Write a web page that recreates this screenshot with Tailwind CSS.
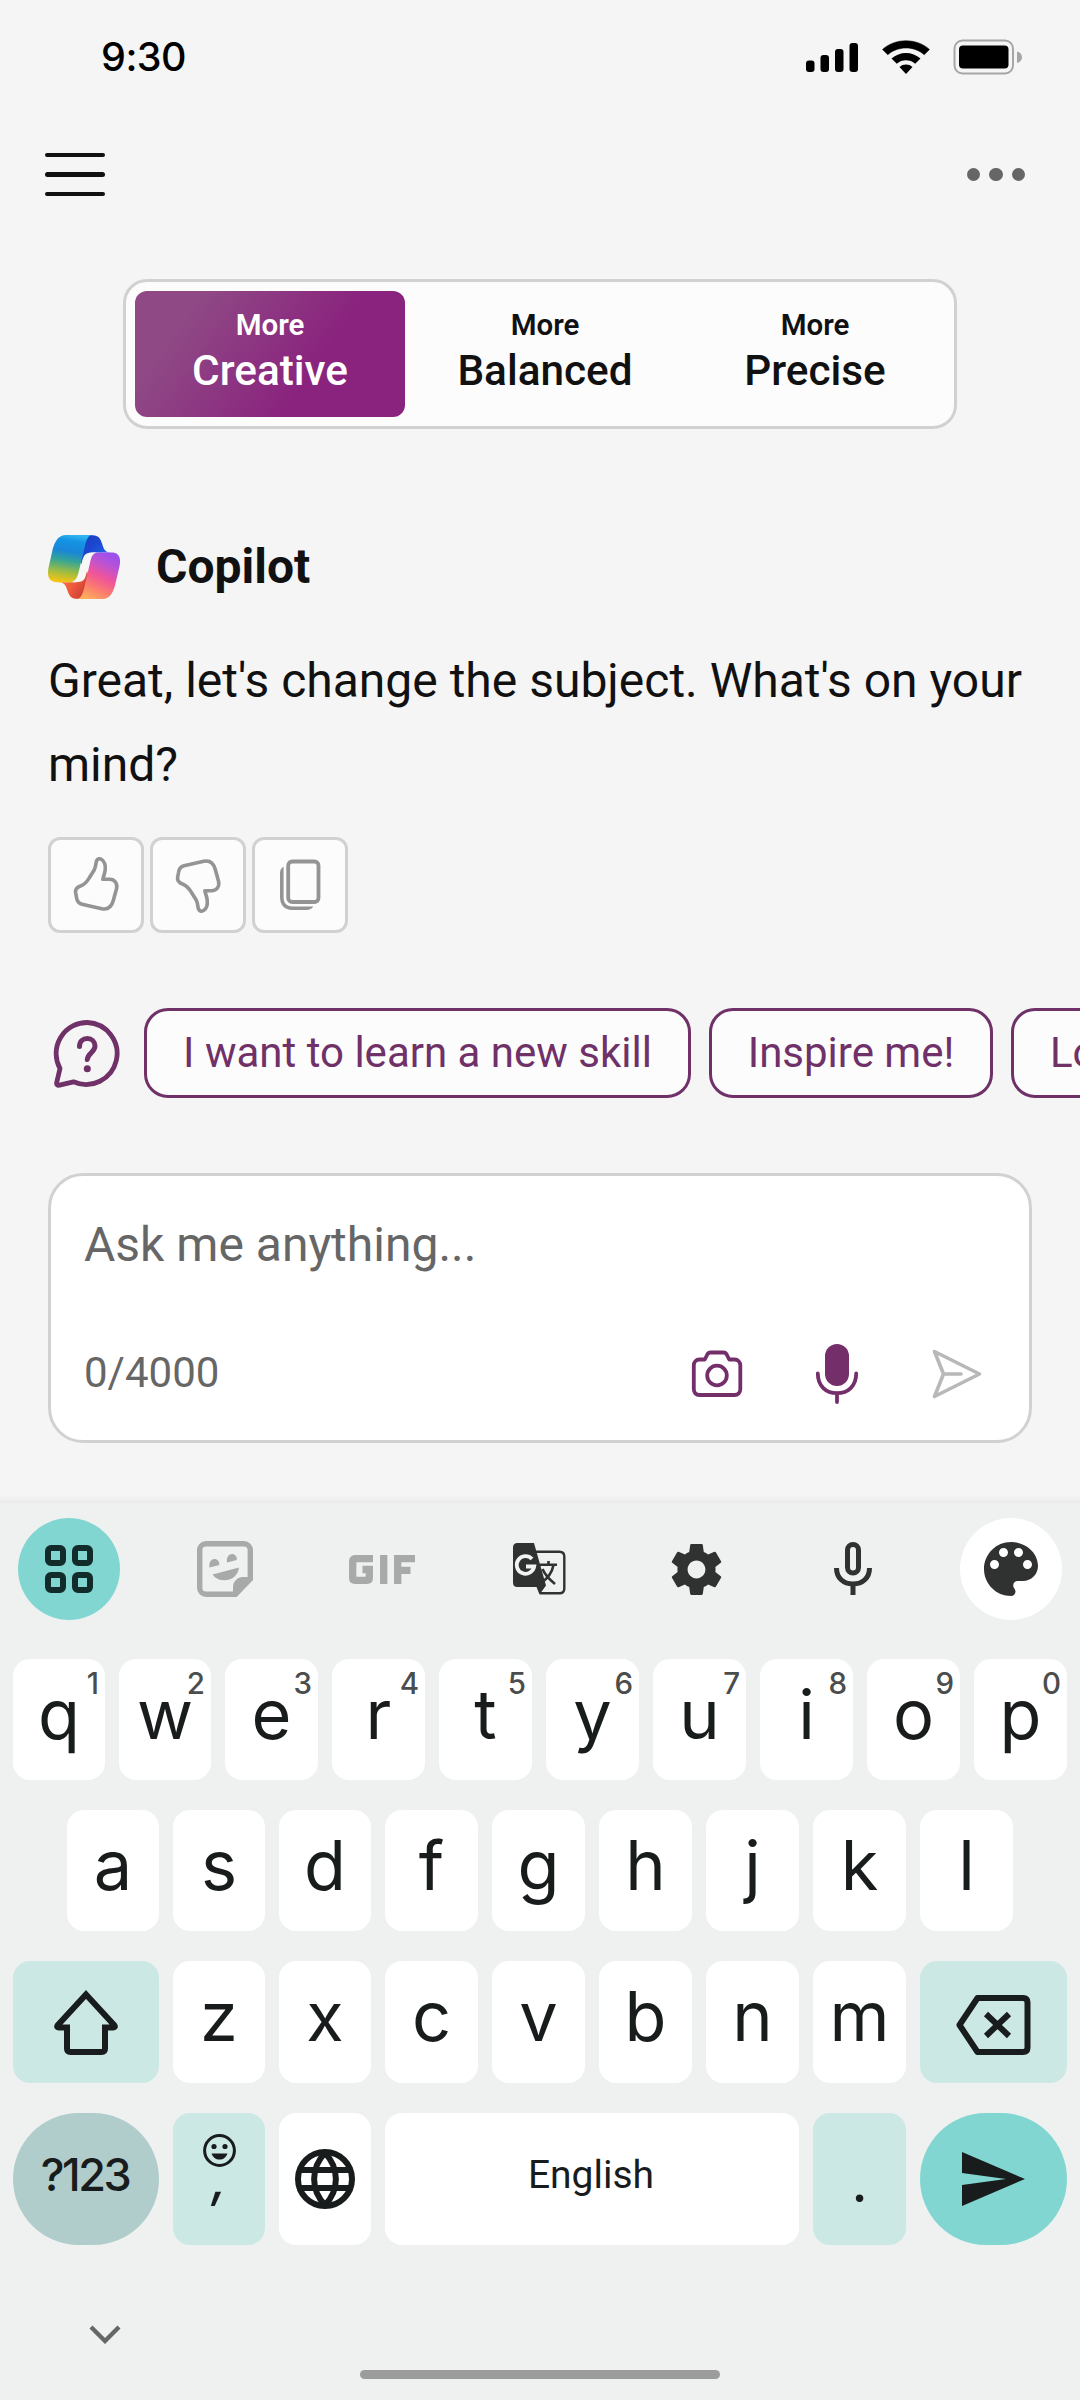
<!DOCTYPE html>
<html lang="en">
<head>
<meta charset="utf-8">
<title>Copilot</title>
<script src="https://cdn.jsdelivr.net/npm/@tailwindcss/browser@4"></script>
</head>
<body class="w-[1080px] h-[2400px] overflow-hidden bg-[#f5f5f5] font-['Roboto',sans-serif] text-[#111111] flex flex-col">

  <!-- Status bar -->
  <header class="h-[112px] flex items-center justify-between pl-[101px] pr-[57px] pt-px shrink-0">
    <span class="font-['Inter',sans-serif] font-medium text-[39.5px] leading-[56px] tracking-[-0.5px] text-black pt-px">9:30</span>
    <svg class="w-[217px] h-9" viewBox="0 0 217 36">
      <g fill="#000">
        <rect x="0" y="21.500" width="8.500" height="11.500" rx="3"/>
        <rect x="14.500" y="16" width="8.500" height="17" rx="3"/>
        <rect x="29" y="10" width="8.500" height="23" rx="3"/>
        <rect x="43.500" y="4" width="8.500" height="29" rx="3"/>
        <path d="M76.500 10.500C89 -1.200 111 -1.200 123.500 10.500L118.200 15.800C108.500 6.800 91.500 6.800 81.800 15.800Z" stroke="#000" stroke-width="0.500" stroke-linejoin="round"/>
        <path d="M85.500 19.500C93.500 12 106.500 12 114.500 19.500L109.200 24.800C104 20.200 96 20.200 90.800 24.800Z"/>
        <path d="M93.500 28C97 24.700 103 24.700 106.500 28L100 35Z"/>
        <rect x="153" y="6.500" width="49.500" height="23" rx="4"/>
      </g>
      <rect x="148.500" y="1.500" width="58.500" height="33" rx="8" fill="none" stroke="#a6a6a6" stroke-width="2"/>
      <path d="M211 12.500C214 13 216 15.500 216 18.200C216 21 214 23.500 211 24Z" fill="#a6a6a6"/>
    </svg>
  </header>

  <!-- App bar -->
  <nav class="h-[125px] flex items-center justify-between pl-[45px] pr-[55px] shrink-0">
    <div class="w-[60px] flex flex-col gap-[15px]">
      <span class="h-[4.500px] rounded-full bg-[#111111]"></span>
      <span class="h-[4.500px] rounded-full bg-[#111111]"></span>
      <span class="h-[4.500px] rounded-full bg-[#111111]"></span>
    </div>
    <div class="flex gap-[9px]">
      <span class="size-[13.500px] rounded-full bg-[#666666]"></span>
      <span class="size-[13.500px] rounded-full bg-[#666666]"></span>
      <span class="size-[13.500px] rounded-full bg-[#666666]"></span>
    </div>
  </nav>

  <!-- Conversation style -->
  <section class="mt-[42px] mx-auto w-[834px] h-[150px] shrink-0 rounded-[24px] border-[3px] border-[#d1d1d1] bg-[#fcfcfc] pl-[9px] py-[9px] flex font-medium">
    <button class="w-[270px] h-[126px] mr-[5px] shrink-0 rounded-[12px] bg-[linear-gradient(125deg,#8f4a85_0%,#8f4a85_18%,#8a237e_65%,#8a237e_100%)] text-white flex flex-col items-center pt-[19px]">
      <span class="text-[29.500px] leading-[30px] font-semibold">More</span>
      <span class="text-[42.300px] leading-[48px] mt-[7px]">Creative</span>
    </button>
    <button class="w-[270px] h-[126px] shrink-0 flex flex-col items-center pt-[19px]">
      <span class="text-[29.500px] leading-[30px] font-semibold">More</span>
      <span class="text-[42.300px] leading-[48px] mt-[7px]">Balanced</span>
    </button>
    <button class="w-[270px] h-[126px] shrink-0 flex flex-col items-center pt-[19px]">
      <span class="text-[29.500px] leading-[30px] font-semibold">More</span>
      <span class="text-[42.300px] leading-[48px] mt-[7px]">Precise</span>
    </button>
  </section>

  <!-- Answer -->
  <section class="mt-[106px] px-12 shrink-0">
    <div class="flex items-center gap-9 h-16">
      <svg class="w-[72px] h-16" viewBox="24 30 216 190" preserveAspectRatio="none">
        <defs>
          <linearGradient id="left" x1="0.550" y1="0" x2="0.400" y2="1">
            <stop offset="0" stop-color="#2fb3f0"/><stop offset="0.120" stop-color="#1494e4"/><stop offset="0.350" stop-color="#1a86d8"/><stop offset="0.550" stop-color="#36a595"/><stop offset="0.780" stop-color="#9abc44"/><stop offset="1" stop-color="#f4c414"/>
          </linearGradient>
          <linearGradient id="blue" x1="0" y1="0" x2="1" y2="1">
            <stop offset="0" stop-color="#1a3bb5"/><stop offset="0.450" stop-color="#1b48d2"/><stop offset="1" stop-color="#2c7cf0"/>
          </linearGradient>
          <linearGradient id="right" x1="0.750" y1="0" x2="0.300" y2="1">
            <stop offset="0" stop-color="#9a4ff0"/><stop offset="0.220" stop-color="#b853d6"/><stop offset="0.500" stop-color="#f0549a"/><stop offset="0.750" stop-color="#fb7a70"/><stop offset="1" stop-color="#ffab5c"/>
          </linearGradient>
          <linearGradient id="orange" x1="0" y1="0.200" x2="0.900" y2="0.700">
            <stop offset="0" stop-color="#f9793c"/><stop offset="0.550" stop-color="#ee5a3c"/><stop offset="1" stop-color="#c83c34"/>
          </linearGradient>
        </defs>
        <path d="M148 30C176 30 180 38 186 55C191 70 194 81 212 82H160C140 82 132 92 124 118L110 60Z" fill="url(#blue)"/>
        <path d="M116 220C92 220 88 211 82 194C77 178 73 170 54 170H102C122 170 130 160 140 132L155 190Z" fill="url(#orange)"/>
        <path d="M155 30H78C54 30 45 50 38 72L26 125C20 155 28 170 52 170H90C106 170 112 155 116 140L134 66C140 40 146 32 155 30Z" fill="url(#left)"/>
        <path d="M110 220H188C210 220 219 200 225 180L238 125C244 98 238 82 214 82H176C160 82 155 92 151 108L134 182C128 208 122 218 110 220Z" fill="url(#right)"/>
        <path d="M158 82C138 82 132 88 127 106L118 142C112 162 107 170 98 170H106C126 170 134 166 138 148L149 110C154 88 160 82 176 82Z" fill="#f7f7f8"/>
      </svg>
      <h1 class="font-bold text-[48px] leading-[64px]">Copilot</h1>
    </div>
    <p class="mt-[40px] w-[984px] text-[48px] leading-[84px] whitespace-nowrap">Great, let's change the subject. What's on your<br>mind?</p>
    <div class="mt-[30px] flex gap-1.5">
      <button class="size-24 rounded-[12px] border-[3px] border-[#d1d1d1] bg-[#fcfcfc]">
        <svg class="-m-[3px] size-24" viewBox="0 0 96 96" fill="none" stroke="#949494" stroke-width="3.600" stroke-linejoin="round" stroke-linecap="round">
          <path d="M48.500 24C49.500 21.500 52 21.300 53.800 22.600C56.500 24.600 57.800 28 57.200 33C56.700 37 55.300 39.500 54.800 42.300H61.500C66.700 42.300 69.700 46.500 68.600 51.500L65.300 63.500C63.700 69.500 60 73 53.800 71.800L34 67.200C30.500 66.400 29 64 28.500 60.500L27.600 55.500C27 51.500 29.500 50 33 48.800C37.500 47.200 39 44.500 41.500 40.500L46.200 33C47.800 30 47.500 27 48.500 24Z"/>
        </svg>
      </button>
      <button class="size-24 rounded-[12px] border-[3px] border-[#d1d1d1] bg-[#fcfcfc]">
        <svg class="-m-[3px] size-24 -scale-y-100" viewBox="0 0 96 96" fill="none" stroke="#949494" stroke-width="3.600" stroke-linejoin="round" stroke-linecap="round">
          <path d="M48.500 24C49.500 21.500 52 21.300 53.800 22.600C56.500 24.600 57.800 28 57.200 33C56.700 37 55.300 39.500 54.800 42.300H61.500C66.700 42.300 69.700 46.500 68.600 51.500L65.300 63.500C63.700 69.500 60 73 53.800 71.800L34 67.200C30.500 66.400 29 64 28.500 60.500L27.600 55.500C27 51.500 29.500 50 33 48.800C37.500 47.200 39 44.500 41.500 40.500L46.200 33C47.800 30 47.500 27 48.500 24Z"/>
        </svg>
      </button>
      <button class="size-24 rounded-[12px] border-[3px] border-[#d1d1d1] bg-[#fcfcfc]">
        <svg class="-m-[3px] size-24" viewBox="0 0 96 96">
          <rect x="36.200" y="24.500" width="30.300" height="40.500" rx="4" fill="none" stroke="#949494" stroke-width="3.800"/>
          <path d="M31.600 29.700V60C31.600 66 34.500 69.500 40.500 69.500H61.300C60 71.800 57.500 73 54.500 73H40C32.500 73 28 68 28 60V36C28 33 29.300 31 31.600 29.700Z" fill="#949494"/>
        </svg>
      </button>
    </div>
  </section>

  <!-- Suggestions -->
  <section class="mt-[75px] h-[90px] shrink-0 pl-[53px] flex items-center overflow-hidden text-[#6f3168]">
    <svg class="w-[68px] h-[68px] mr-[23px] mt-[1px] shrink-0" viewBox="0 0 68 68" fill="none" stroke="#6f3168">
      <path d="M34.300 2.500A31 31 0 1 1 20.500 61.800L6.500 65.200C4.500 65.600 3.200 64.500 3.700 62.500L7 48.500A31 31 0 0 1 34.300 2.500Z" stroke-width="4.800" stroke-linejoin="round"/>
      <path d="M26.500 26.500C26.500 21.500 30 18.500 34.300 18.500C38.800 18.500 42 21.800 42 26C42 32.500 34.500 33 34.300 39.500" stroke-width="5" stroke-linecap="round"/>
      <circle cx="34.300" cy="48.800" r="3.500" fill="#6f3168" stroke="none"/>
    </svg>
    <div class="flex gap-[18px] text-[42px] leading-[84px] whitespace-nowrap">
      <button class="w-[547px] h-[90px] rounded-[24px] border-[3px] border-[#6f3168] bg-[#fcfcfc] shrink-0 pb-[3px]">I want to learn a new skill</button>
      <button class="w-[284px] h-[90px] rounded-[24px] border-[3px] border-[#6f3168] bg-[#fcfcfc] shrink-0 pb-[3px]">Inspire me!</button>
      <button class="w-[300px] h-[90px] rounded-[24px] border-[3px] border-[#6f3168] bg-[#fcfcfc] shrink-0 pb-[3px] pl-9 text-left">Lo</button>
    </div>
  </section>

  <!-- Composer -->
  <section class="mt-[75px] mx-12 h-[270px] shrink-0 rounded-[35px] border-[3px] border-[#d1d1d1] bg-white pl-[33px] pr-[41px] pt-[41px] text-[#666666]">
    <p class="text-[48px] leading-[56px]">Ask me anything...</p>
    <div class="mt-[66px] h-[70px] flex items-center justify-between">
      <span class="text-[42px] leading-[50px] pb-[3px]">0/4000</span>
      <svg class="w-[300px] h-[70px]" viewBox="688 1339 300 70" fill="none" stroke-linejoin="round" stroke-linecap="round">
        <g stroke="#742f6b" stroke-width="3.800">
          <path d="M710.500 1352.500H723.500C725 1352.500 726 1353.200 726.700 1354.500L729.200 1359.500H734.500C738 1359.500 740.300 1362 740.300 1365.500V1389C740.300 1392.700 738 1395 734.500 1395H699.500C696 1395 693.800 1392.700 693.800 1389V1365.500C693.800 1362 696 1359.500 699.500 1359.500H704.800L707.300 1354.500C708 1353.200 709 1352.500 710.500 1352.500Z"/>
          <circle cx="717" cy="1375.500" r="9.800"/>
          <path d="M817.800 1373.500C817.800 1386 826 1393.200 837 1393.200S856.200 1386 856.200 1373.500M837 1394V1402"/>
        </g>
        <rect x="825" y="1344" width="24" height="42" rx="12" fill="#742f6b"/>
        <path d="M934.500 1351.500L979.500 1374L934.500 1396.500L943.500 1374ZM943.500 1374H961" stroke="#b8b8b8" stroke-width="3.600"/>
      </svg>
    </div>
  </section>

  <!-- Keyboard -->
  <section class="mt-[52px] h-[905px] shrink-0 text-[#191c1c] font-['Inter',sans-serif]">
    <div class="h-2 bg-linear-to-b from-[#f5f5f5] to-[#ebebeb]"></div>
    <div class="h-full bg-[#eef1f0] pt-[15px]">
    <!-- Toolbar -->
    <div class="h-[102px] mx-[18px] flex justify-between">
      <div class="size-[102px] rounded-full bg-[#81d6d1] flex items-center justify-center">
        <svg class="size-12" viewBox="0 0 48 48" fill="none" stroke="#122b2b" stroke-width="6">
          <rect x="3" y="3" width="15" height="15" rx="3"/><rect x="30" y="3" width="15" height="15" rx="3"/>
          <rect x="3" y="30" width="15" height="15" rx="3"/><rect x="30" y="30" width="15" height="15" rx="3"/>
        </svg>
      </div>
      <div class="size-[102px] pr-0.5 flex items-center justify-center">
        <svg class="size-14" viewBox="0 0 56 56">
          <path d="M9 2.700H47C50.500 2.700 53.300 5.500 53.300 9V38L38.500 53.300H9C5.500 53.300 2.700 50.500 2.700 47V9C2.700 5.500 5.500 2.700 9 2.700Z" fill="none" stroke="#a8aaa9" stroke-width="5.400"/>
          <path d="M36 55V46C36 40.500 40.500 36 46 36H55Z" fill="#a8aaa9"/>
          <path d="M15.500 33.500L42 26.500C41 34 35.500 39.300 27.500 39.300C22 39.300 18 37.300 15.500 33.500Z" fill="#a8aaa9"/>
          <path d="M12.500 26.500C11.500 21 14.500 18 17.500 18C20.500 18 22.500 20.500 22.300 24Z" fill="#a8aaa9"/>
          <path d="M30 21.500C29 16 32 13 35 13C38 13 40 15.500 39.800 19Z" fill="#a8aaa9"/>
        </svg>
      </div>
      <div class="size-[102px] pr-0.5 flex items-center justify-center">
        <svg class="w-[66px] h-[29px]" viewBox="0 0 66 29" fill="none" stroke="#a8aaa9" stroke-width="7.300" role="img" aria-label="GIF">
          <path d="M24 3.700H6Q3.700 3.700 3.700 6V23Q3.700 25.300 6 25.300H18Q20.300 25.300 20.300 23V14.500H13.500"/>
          <path d="M34.700 0V29M48.700 29V3.700H66M48.700 15.300H61.500"/>
        </svg>
      </div>
      <div class="size-[102px] pr-0.5 flex items-center justify-center">
        <svg class="w-[53px] h-[52px]" viewBox="0 0 53 52">
          <path d="M20 8.700H46.500Q51.300 8.700 51.300 13.500V45.500Q51.300 50.300 46.500 50.300H27" fill="none" stroke="#303231" stroke-width="2.400"/>
          <path d="M4.500 0H21L33 42.500L26.500 51.500L23.500 44H4.500Q0 44 0 39.500V4.500Q0 0 4.500 0Z" fill="#303231"/>
          <path d="M19 16A8.800 8.800 0 1 0 21.200 23.500H13" fill="none" stroke="#f2f4f3" stroke-width="3.800"/>
          <path d="M27 21.700H44M35.500 18V21.700M40.500 22C39 30 34 36 28 40M29.500 26C32 32 36.500 36.500 42 41" fill="none" stroke="#303231" stroke-width="2.600"/>
        </svg>
      </div>
      <div class="size-[102px] pr-0.5 flex items-center justify-center">
        <svg class="size-[61px]" viewBox="0 0 24 24" fill="#303231">
          <path d="M19.430 12.980c.04-.32.07-.64.07-.98s-.03-.66-.07-.98l2.110-1.650c.19-.15.24-.42.12-.64l-2-3.460c-.12-.22-.39-.3-.61-.22l-2.490 1c-.52-.4-1.080-.73-1.690-.98l-.38-2.650C14.460 2.180 14.250 2 14 2h-4c-.25 0-.46.18-.49.42l-.38 2.650c-.61.25-1.170.59-1.690.98l-2.490-1c-.23-.09-.49 0-.61.22l-2 3.460c-.13.22-.07.49.12.64l2.110 1.650c-.04.32-.07.65-.07.98s.03.66.07.98l-2.110 1.650c-.19.15-.24.42-.12.64l2 3.460c.12.22.39.3.61.22l2.490-1c.52.4 1.080.73 1.690.98l.38 2.650c.03.24.24.42.49.42h4c.25 0 .46-.18.49-.42l.38-2.650c.61-.25 1.170-.59 1.690-.98l2.490 1c.23.09.49 0 .61-.22l2-3.460c.12-.22.07-.49-.12-.64l-2.110-1.650zM12 15.500c-1.930 0-3.500-1.570-3.500-3.500s1.570-3.500 3.500-3.500 3.500 1.570 3.500 3.500-1.570 3.500-3.500 3.500z"/>
        </svg>
      </div>
      <div class="size-[102px] pr-0.5 flex items-center justify-center">
        <svg class="w-[38px] h-[54px]" viewBox="0 0 38 54" fill="none" stroke="#303231" stroke-width="5">
          <rect x="13.500" y="2.500" width="11" height="28.500" rx="5.500"/>
          <path d="M2.500 26C2.500 36 9.500 42 19 42S35.500 36 35.500 26M19 42V53"/>
        </svg>
      </div>
      <div class="size-[102px] rounded-full bg-white flex items-center justify-center">
        <svg class="size-[54px]" viewBox="3 3 18 18" fill="#303231">
          <path d="M12 3c-4.970 0-9 4.030-9 9s4.030 9 9 9c.83 0 1.500-.67 1.500-1.500 0-.39-.15-.74-.39-1.010-.23-.26-.38-.61-.38-.99 0-.83.67-1.500 1.500-1.500H16c2.760 0 5-2.240 5-5 0-4.420-4.030-8-9-8zm-5.500 9c-.83 0-1.500-.67-1.500-1.500S5.670 9 6.500 9 8 9.670 8 10.500 7.330 12 6.500 12zm3-4C8.670 8 8 7.330 8 6.500S8.670 5 9.500 5s1.500.67 1.500 1.500S10.330 8 9.500 8zm5 0c-.83 0-1.500-.67-1.500-1.500S13.670 5 14.500 5s1.500.67 1.500 1.500S15.330 8 14.500 8zm3 4c-.83 0-1.500-.67-1.500-1.500S16.670 9 17.500 9s1.500.67 1.500 1.500-.67 1.500-1.500 1.500z"/>
        </svg>
      </div>
    </div>

    <!-- Keys -->
    <div class="mt-[39px] px-[13px] flex flex-col gap-[30px] text-[68.500px] leading-[111px] text-center">
      <div class="h-[121px] grid grid-cols-[92px_92px_repeat(8,93px)] gap-[14px]">
        <div class="relative bg-white rounded-[17px]">q<span class="absolute top-[6px] right-[6px] text-[29.500px] leading-[36px] font-medium text-[#4b4d4d]">1</span></div>
        <div class="relative bg-white rounded-[17px]">w<span class="absolute top-[6px] right-[6px] text-[29.500px] leading-[36px] font-medium text-[#4b4d4d]">2</span></div>
        <div class="relative bg-white rounded-[17px]">e<span class="absolute top-[6px] right-[6px] text-[29.500px] leading-[36px] font-medium text-[#4b4d4d]">3</span></div>
        <div class="relative bg-white rounded-[17px]">r<span class="absolute top-[6px] right-[6px] text-[29.500px] leading-[36px] font-medium text-[#4b4d4d]">4</span></div>
        <div class="relative bg-white rounded-[17px]">t<span class="absolute top-[6px] right-[6px] text-[29.500px] leading-[36px] font-medium text-[#4b4d4d]">5</span></div>
        <div class="relative bg-white rounded-[17px]">y<span class="absolute top-[6px] right-[6px] text-[29.500px] leading-[36px] font-medium text-[#4b4d4d]">6</span></div>
        <div class="relative bg-white rounded-[17px]">u<span class="absolute top-[6px] right-[6px] text-[29.500px] leading-[36px] font-medium text-[#4b4d4d]">7</span></div>
        <div class="relative bg-white rounded-[17px]">i<span class="absolute top-[6px] right-[6px] text-[29.500px] leading-[36px] font-medium text-[#4b4d4d]">8</span></div>
        <div class="relative bg-white rounded-[17px]">o<span class="absolute top-[6px] right-[6px] text-[29.500px] leading-[36px] font-medium text-[#4b4d4d]">9</span></div>
        <div class="relative bg-white rounded-[17px]">p<span class="absolute top-[6px] right-[6px] text-[29.500px] leading-[36px] font-medium text-[#4b4d4d]">0</span></div>
      </div>
      <div class="h-[121px] grid grid-cols-[repeat(3,92px)_repeat(6,93px)] gap-[14px] pl-[54px]">
        <div class="bg-white rounded-[17px]">a</div>
        <div class="bg-white rounded-[17px]">s</div>
        <div class="bg-white rounded-[17px]">d</div>
        <div class="bg-white rounded-[17px]">f</div>
        <div class="bg-white rounded-[17px]">g</div>
        <div class="bg-white rounded-[17px]">h</div>
        <div class="bg-white rounded-[17px]">j</div>
        <div class="bg-white rounded-[17px]">k</div>
        <div class="bg-white rounded-[17px]">l</div>
      </div>
      <div class="h-[122px] grid grid-cols-[146px_92px_92px_repeat(5,93px)_147px] gap-[14px]">
        <div class="bg-[#cce8e5] rounded-[17px] flex items-center justify-center">
          <svg class="w-[68px] h-[66px] mt-0.5" viewBox="0 0 68 66" fill="none" stroke="#191c1c" stroke-width="6">
            <path d="M34 4.500L62.500 35.500Q63.500 37.500 61.500 37.500H53V58.500Q53 62 49.500 62H18.500Q15 62 15 58.500V37.500H6.500Q4.500 37.500 5.500 35.500Z"/>
          </svg>
        </div>
        <div class="bg-white rounded-[17px]">z</div>
        <div class="bg-white rounded-[17px]">x</div>
        <div class="bg-white rounded-[17px]">c</div>
        <div class="bg-white rounded-[17px]">v</div>
        <div class="bg-white rounded-[17px]">b</div>
        <div class="bg-white rounded-[17px]">n</div>
        <div class="bg-white rounded-[17px]">m</div>
        <div class="bg-[#cce8e5] rounded-[17px] flex items-center justify-center">
          <svg class="w-[76px] h-[60px] mt-[6px] mr-0.5" viewBox="0 0 76 60" fill="none" stroke="#191c1c" stroke-width="6">
            <path d="M22.500 3H68Q72.500 3 72.500 7.500V52.500Q72.500 57 68 57H22.500L4.500 30Z" stroke-linejoin="round"/>
            <path d="M31 19L54 41M54 19L31 41"/>
          </svg>
        </div>
      </div>
      <div class="h-[125px] grid grid-cols-[146px_92px_92px_414px_93px_147px] gap-[14px]">
        <div class="bg-[#b0cccb] rounded-full font-medium text-[45px] leading-[124px] tracking-[-2.500px] pr-0.5">?123</div>
        <div class="bg-[#cce8e5] rounded-[17px] flex flex-col items-center pt-[21px]">
          <svg class="size-[33px]" viewBox="0 0 33 33" fill="#191c1c">
            <circle cx="16.500" cy="16.500" r="14.900" fill="none" stroke="#191c1c" stroke-width="3"/>
            <circle cx="11" cy="12.500" r="2.600"/><circle cx="22" cy="12.500" r="2.600"/>
            <path d="M8.500 19.500H24.500C23.200 23.300 20.200 25.600 16.500 25.600S9.800 23.300 8.500 19.500Z"/>
          </svg>
          <span class="text-[50px] leading-[50px] font-medium -mt-[13px] italic">,</span>
        </div>
        <div class="bg-white rounded-[17px] flex items-center justify-center">
          <svg class="size-[60px]" viewBox="0 0 60 60" fill="none" stroke="#191c1c" stroke-width="6">
            <circle cx="30" cy="30" r="27"/><path d="M5 21H55M5 39H55"/>
            <path d="M30 4C15.500 19 15.500 41 30 56C44.500 41 44.500 19 30 4Z"/>
          </svg>
        </div>
        <div class="bg-white rounded-[17px] font-['Roboto',sans-serif] text-[39px] leading-[125px] pr-0.5">English</div>
        <div class="bg-[#cce8e5] rounded-[17px] font-['Lato',sans-serif] text-[60px] leading-[132px]">.</div>
        <div class="bg-[#81d6d1] rounded-full flex items-center justify-center">
          <svg class="w-[63px] h-[54px]" viewBox="0 0 63 54"><path d="M0 0L63 27L0 54V33L44 27L0 21Z" fill="#191c1c"/></svg>
        </div>
      </div>
    </div>

    <!-- Navigation -->
    <svg class="ml-[89px] mt-[86px] w-8 h-5" viewBox="0 0 32 20" fill="none" stroke="#666666" stroke-width="4.300"><path d="M2 3L16 17L30 3"/></svg>
    <div class="mt-[26px] mx-auto w-[360px] h-[9px] rounded-full bg-[#9c9c9c]"></div>
    </div>
  </section>
</body>
</html>
